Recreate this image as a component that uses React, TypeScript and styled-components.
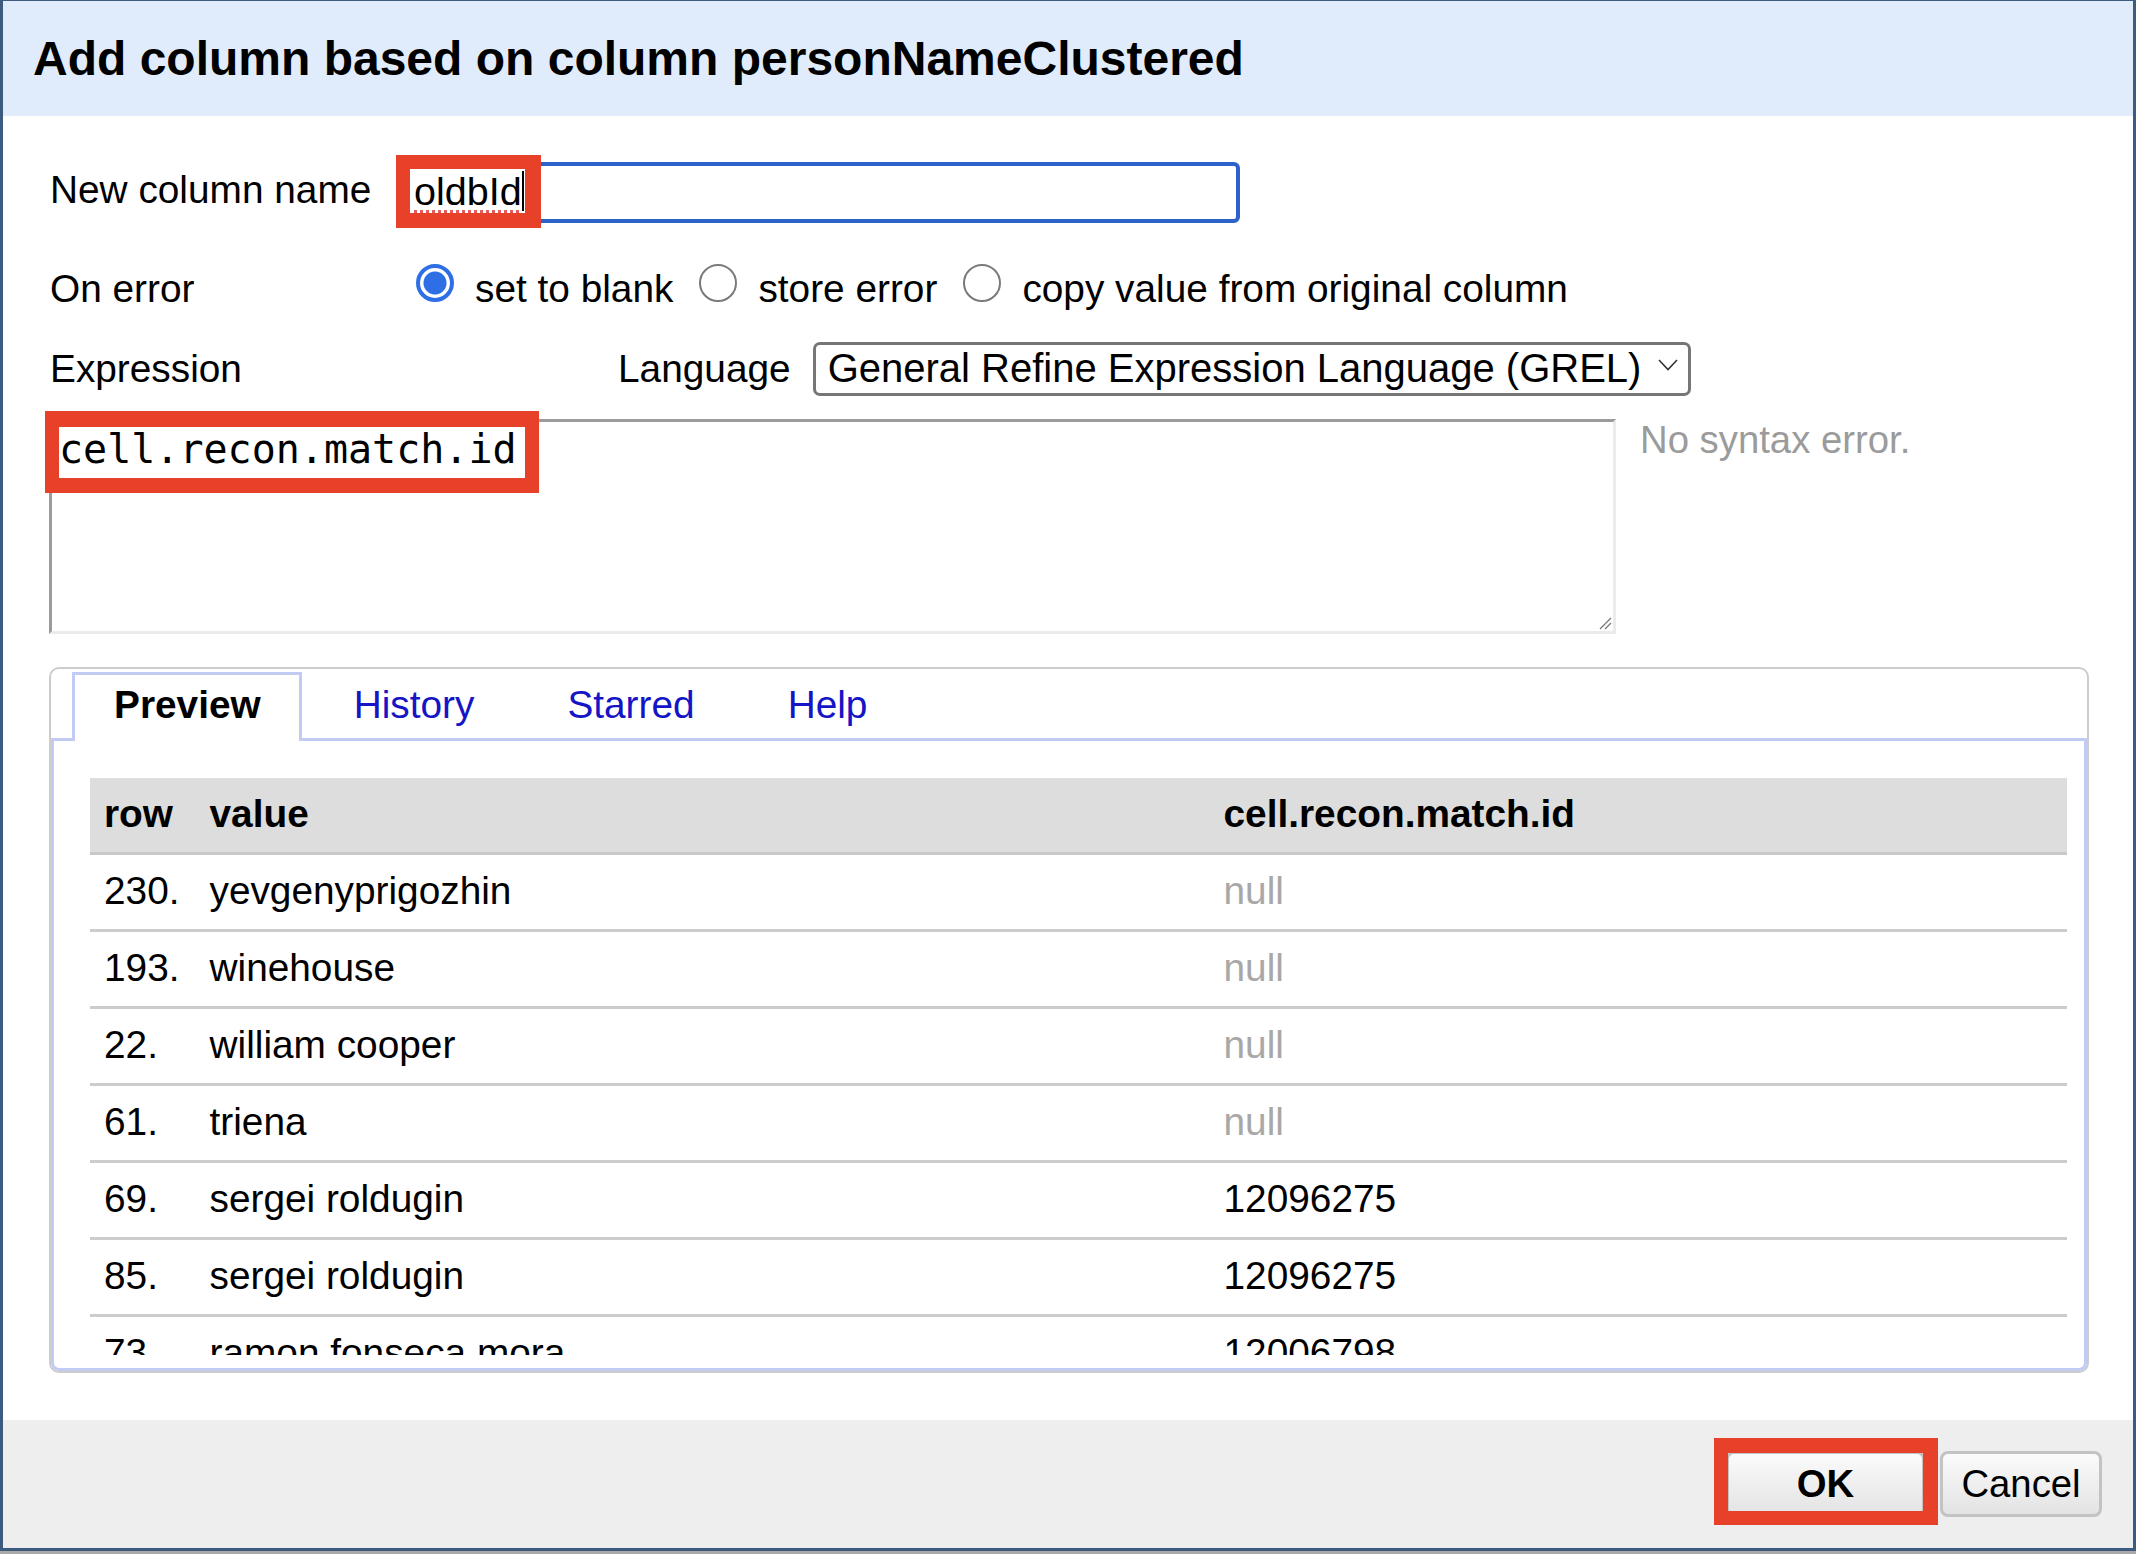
import React from "react";
import styled, { createGlobalStyle } from "styled-components";

const GlobalStyle = createGlobalStyle`
  html, body { margin: 0; padding: 0; }
  body {
    background: #a9a9a9;
    width: 2136px;
    height: 1554px;
    overflow: hidden;
    font-family: "Liberation Sans", Arial, Helvetica, sans-serif;
    color: #000;
  }
`;

const RED = "#e8412a";
const TAB_BLUE = "#c1cbf4";

const Dialog = styled.div`
  box-sizing: border-box;
  width: 2136px;
  height: 1551px;
  border-style: solid;
  border-color: #3d5a7f;
  border-width: 1px 3px 3px 3px;
  background: #fff;
  display: flex;
  flex-direction: column;
`;

const TitleBar = styled.div`
  flex: none;
  box-sizing: border-box;
  height: 115px;
  background: #e0ecfb;
  padding: 30px 0 0 30px;
  font-size: 48px;
  font-weight: bold;
  line-height: 56px;
`;

const Body = styled.div`
  flex: 1;
  display: flex;
  flex-direction: column;
  padding: 46px 44px 0 46px;
  font-size: 38.8px;
  line-height: 44px;
`;

const FormRow = styled.div<{ $mt: number }>`
  display: grid;
  grid-template-columns: 349px 1fr;
  align-items: start;
  margin-top: ${(p) => p.$mt}px;
`;

const Label = styled.div<{ $pt: number }>`
  padding-top: ${(p) => p.$pt}px;
  padding-left: 1px;
  white-space: nowrap;
`;

const FieldWrap = styled.div`
  position: relative;
  width: 842px;
`;

const NameInput = styled.div`
  box-sizing: border-box;
  height: 61px;
  border: 4px solid #2c62c9;
  border-radius: 6px;
  padding: 3px 12px 0;
  font-size: 39.5px;
  line-height: 44px;
  display: flex;
  align-items: flex-start;
`;

const Spelled = styled.span`
  text-decoration: underline dotted #e25c5c;
  text-decoration-thickness: 3px;
  text-underline-offset: 5px;
`;

const Caret = styled.span`
  display: inline-block;
  width: 2px;
  height: 40px;
  margin-top: 2px;
  background: #000;
`;

const Highlight = styled.div<{ $l: number; $t: number; $w: number; $h: number; $bw: string }>`
  position: absolute;
  box-sizing: border-box;
  left: ${(p) => p.$l}px;
  top: ${(p) => p.$t}px;
  width: ${(p) => p.$w}px;
  height: ${(p) => p.$h}px;
  border-style: solid;
  border-color: ${RED};
  border-width: ${(p) => p.$bw};
  pointer-events: none;
  z-index: 5;
`;

const RadioGroup = styled.div`
  display: flex;
  align-items: flex-start;
  gap: 8px;
`;

const RadioOption = styled.div`
  display: flex;
  align-items: flex-start;
`;

const Radio = styled.span<{ $checked?: boolean }>`
  box-sizing: border-box;
  flex: none;
  width: 38px;
  height: 38px;
  margin-left: 18px;
  margin-top: 0;
  border-radius: 50%;
  border: ${(p) => (p.$checked ? "4px solid #2e6fe6" : "2.5px solid #7a7a7a")};
  background: ${(p) =>
    p.$checked ? "radial-gradient(circle, #2e6fe6 0 11px, #fff 12px)" : "#fff"};
`;

const RadioText = styled.span`
  margin-left: 21px;
  padding-top: 3px;
  white-space: nowrap;
`;

const LangRow = styled.div`
  display: flex;
  align-items: flex-start;
`;

const LangLabel = styled.div`
  margin-left: 220px;
  padding-top: 4.6px;
`;

const SelectBox = styled.div`
  box-sizing: border-box;
  margin-left: 22px;
  width: 878px;
  height: 54px;
  border: 3px solid #767676;
  border-radius: 7px;
  padding: 1px 10px 0 12px;
  font-size: 40px;
  line-height: 44px;
  display: flex;
  justify-content: space-between;
  align-items: flex-start;
  white-space: nowrap;
`;

const Chevron = styled.svg`
  margin-top: 13px;
`;

const ExprRow = styled.div`
  display: flex;
  align-items: flex-start;
  margin-top: 23px;
`;

const TextareaWrap = styled.div`
  position: relative;
  width: 1567px;
  height: 215px;
`;

const TextArea = styled.div`
  box-sizing: border-box;
  width: 100%;
  height: 100%;
  border-style: solid;
  border-width: 3px;
  border-color: #9b9b9b #ebebeb #ebebeb #9b9b9b;
  padding: 5px 7px;
  font-family: "DejaVu Sans Mono", "Liberation Mono", monospace;
  font-size: 40px;
  line-height: 44px;
`;

const Grip = styled.svg`
  position: absolute;
  right: 4px;
  bottom: 4px;
`;

const SyntaxStatus = styled.div`
  margin-left: 24px;
  margin-top: -1px;
  color: #9b9b9b;
  font-size: 38.3px;
  white-space: nowrap;
`;

const TabsBox = styled.div`
  margin-top: 33px;
  border: 2px solid #cccccc;
  border-radius: 10px;
  display: flex;
  flex-direction: column;
`;

const TabNav = styled.div`
  display: flex;
  gap: 10px;
  padding: 3px 0 0 21px;
`;

const Tab = styled.div<{ $active?: boolean }>`
  position: relative;
  z-index: 2;
  margin-bottom: -3px;
  border: 3px solid ${(p) => (p.$active ? TAB_BLUE : "transparent")};
  border-bottom: none;
  background: ${(p) => (p.$active ? "#fff" : "transparent")};
  padding: 8px 38px 14px 39px;
  font-weight: ${(p) => (p.$active ? "bold" : "normal")};
  color: ${(p) => (p.$active ? "#000" : "#1515c6")};
  white-space: nowrap;
`;

const Panel = styled.div`
  position: relative;
  z-index: 1;
  border: 3px solid ${TAB_BLUE};
  border-radius: 0 0 8px 8px;
  padding: 36.5px 17px 13px 35.5px;
`;

const ScrollArea = styled.div`
  height: 577.5px;
  overflow: hidden;
`;

const TableRow = styled.div<{ $head?: boolean }>`
  box-sizing: border-box;
  height: 77px;
  display: grid;
  grid-template-columns: 105.5px 1014px 1fr;
  background: ${(p) => (p.$head ? "#dddddd" : "#fff")};
  border-bottom: 3px solid ${(p) => (p.$head ? "#c9c9c9" : "#cccccc")};
  font-weight: ${(p) => (p.$head ? "bold" : "normal")};
`;

const Cell = styled.div<{ $muted?: boolean }>`
  padding: 14px 0 0 14.5px;
  white-space: nowrap;
  color: ${(p) => (p.$muted ? "#a8a8a8" : "#000")};
`;

const Footer = styled.div`
  flex: none;
  box-sizing: border-box;
  height: 128px;
  background: #eeeeee;
  display: flex;
  justify-content: flex-end;
  align-items: center;
  gap: 15px;
  padding-right: 31px;
`;

const ButtonWrap = styled.div`
  position: relative;
`;

const Button = styled.div<{ $primary?: boolean; $w: number }>`
  box-sizing: border-box;
  width: ${(p) => p.$w}px;
  height: 66px;
  border: 3px solid #c3c3c3;
  border-radius: 8px;
  background: linear-gradient(#fbfbfb, #e3e3e3);
  display: flex;
  justify-content: center;
  align-items: center;
  font-size: 38.3px;
  font-weight: ${(p) => (p.$primary ? "bold" : "normal")};
`;

const rows: [string, string, string][] = [
  ["230.", "yevgenyprigozhin", "null"],
  ["193.", "winehouse", "null"],
  ["22.", "william cooper", "null"],
  ["61.", "triena", "null"],
  ["69.", "sergei roldugin", "12096275"],
  ["85.", "sergei roldugin", "12096275"],
  ["73.", "ramon fonseca mora", "12006798"],
];

export default function App() {
  return (
    <>
      <GlobalStyle />
      <Dialog>
        <TitleBar>Add column based on column personNameClustered</TitleBar>
        <Body>
          <FormRow $mt={0}>
            <Label $pt={6}>New column name</Label>
            <FieldWrap>
              <NameInput>
                <Spelled>oldbId</Spelled>
                <Caret />
              </NameInput>
              <Highlight $l={-2} $t={-7} $w={145} $h={73} $bw="14px 16px 15px 14px" />
            </FieldWrap>
          </FormRow>

          <FormRow $mt={41}>
            <Label $pt={3}>On error</Label>
            <RadioGroup>
              <RadioOption>
                <Radio $checked />
                <RadioText>set to blank</RadioText>
              </RadioOption>
              <RadioOption>
                <Radio />
                <RadioText>store error</RadioText>
              </RadioOption>
              <RadioOption>
                <Radio />
                <RadioText>copy value from original column</RadioText>
              </RadioOption>
            </RadioGroup>
          </FormRow>

          <FormRow $mt={31}>
            <Label $pt={5}>Expression</Label>
            <LangRow>
              <LangLabel>Language</LangLabel>
              <SelectBox>
                <span>General Refine Expression Language (GREL)</span>
                <Chevron width="20" height="12" viewBox="0 0 20 12">
                  <polyline points="1,1 10,10.5 19,1" fill="none" stroke="#333" strokeWidth="1.6" />
                </Chevron>
              </SelectBox>
            </LangRow>
          </FormRow>

          <ExprRow>
            <TextareaWrap>
              <TextArea>cell.recon.match.id</TextArea>
              <Grip width="14" height="14" viewBox="0 0 14 14">
                <line x1="13" y1="2" x2="2" y2="13" stroke="#777" strokeWidth="1.2" />
                <line x1="13" y1="7" x2="7" y2="13" stroke="#777" strokeWidth="1.2" />
              </Grip>
              <Highlight $l={-4} $t={-8} $w={494} $h={82} $bw="16px 14.5px 15px 14px" />
            </TextareaWrap>
            <SyntaxStatus>No syntax error.</SyntaxStatus>
          </ExprRow>

          <TabsBox>
            <TabNav>
              <Tab $active>Preview</Tab>
              <Tab>History</Tab>
              <Tab>Starred</Tab>
              <Tab>Help</Tab>
            </TabNav>
            <Panel>
              <ScrollArea>
                <TableRow $head>
                  <Cell>row</Cell>
                  <Cell>value</Cell>
                  <Cell>cell.recon.match.id</Cell>
                </TableRow>
                {rows.map(([n, v, r]) => (
                  <TableRow key={n}>
                    <Cell>{n}</Cell>
                    <Cell>{v}</Cell>
                    <Cell $muted={r === "null"}>{r}</Cell>
                  </TableRow>
                ))}
              </ScrollArea>
            </Panel>
          </TabsBox>
        </Body>
        <Footer>
          <ButtonWrap>
            <Button $primary $w={199}>OK</Button>
            <Highlight $l={-12} $t={-13} $w={224} $h={87} $bw="15px 15px 14px 14px" />
          </ButtonWrap>
          <Button $w={162}>Cancel</Button>
        </Footer>
      </Dialog>
    </>
  );
}
